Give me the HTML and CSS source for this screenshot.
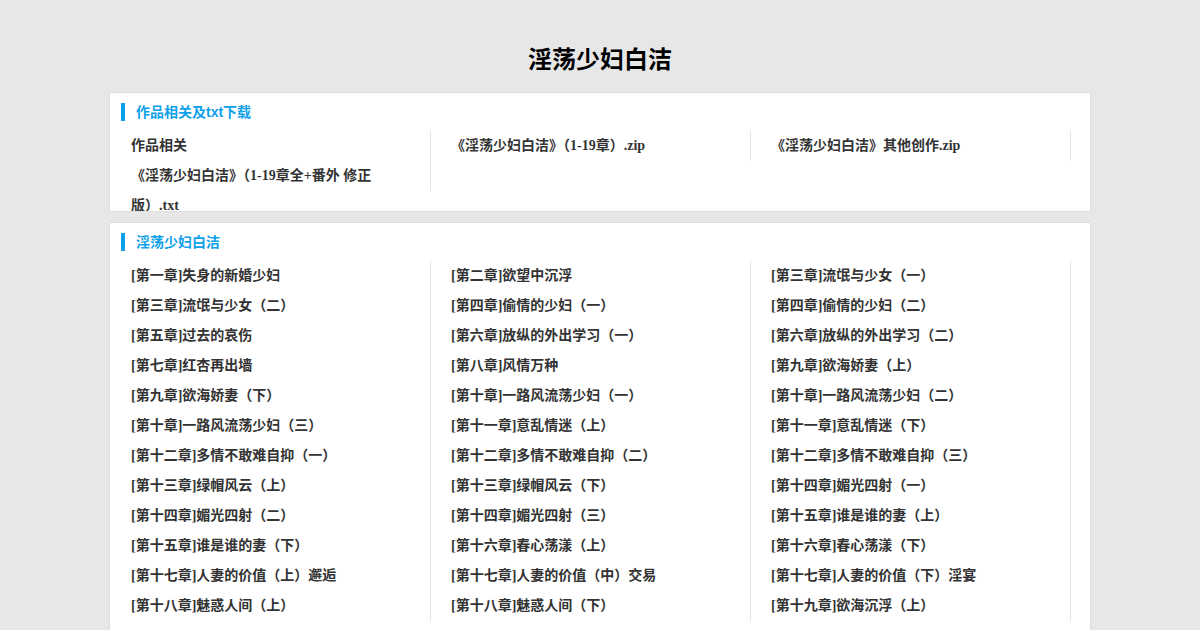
FILE: index.html
```html
<!DOCTYPE html>
<html lang="zh-CN">
<head>
  <meta charset="UTF-8" />
  <meta name="viewport" content="width=device-width, initial-scale=1" />
  <link rel="stylesheet" href="styles.css">
</head>
<body>
  <h1 class="book-title">淫荡少妇白洁</h1>

  <div class="box">
    <div class="box-head"><span>作品相关及txt下载</span></div>
    <ul class="list clearfix">
      <li>作品相关</li>
      <li>《淫荡少妇白洁》（1-19章）.zip</li>
      <li>《淫荡少妇白洁》其他创作.zip</li>
      <li>《淫荡少妇白洁》（1-19章全+番外 修正版）.txt</li>
    </ul>
  </div>

  <div class="box">
    <div class="box-head"><span>淫荡少妇白洁</span></div>
    <ul class="list clearfix">
      <li>[第一章]失身的新婚少妇</li>
      <li>[第二章]欲望中沉浮</li>
      <li>[第三章]流氓与少女（一）</li>
      <li>[第三章]流氓与少女（二）</li>
      <li>[第四章]偷情的少妇（一）</li>
      <li>[第四章]偷情的少妇（二）</li>
      <li>[第五章]过去的哀伤</li>
      <li>[第六章]放纵的外出学习（一）</li>
      <li>[第六章]放纵的外出学习（二）</li>
      <li>[第七章]红杏再出墙</li>
      <li>[第八章]风情万种</li>
      <li>[第九章]欲海娇妻（上）</li>
      <li>[第九章]欲海娇妻（下）</li>
      <li>[第十章]一路风流荡少妇（一）</li>
      <li>[第十章]一路风流荡少妇（二）</li>
      <li>[第十章]一路风流荡少妇（三）</li>
      <li>[第十一章]意乱情迷（上）</li>
      <li>[第十一章]意乱情迷（下）</li>
      <li>[第十二章]多情不敢难自抑（一）</li>
      <li>[第十二章]多情不敢难自抑（二）</li>
      <li>[第十二章]多情不敢难自抑（三）</li>
      <li>[第十三章]绿帽风云（上）</li>
      <li>[第十三章]绿帽风云（下）</li>
      <li>[第十四章]媚光四射（一）</li>
      <li>[第十四章]媚光四射（二）</li>
      <li>[第十四章]媚光四射（三）</li>
      <li>[第十五章]谁是谁的妻（上）</li>
      <li>[第十五章]谁是谁的妻（下）</li>
      <li>[第十六章]春心荡漾（上）</li>
      <li>[第十六章]春心荡漾（下）</li>
      <li>[第十七章]人妻的价值（上）邂逅</li>
      <li>[第十七章]人妻的价值（中）交易</li>
      <li>[第十七章]人妻的价值（下）淫宴</li>
      <li>[第十八章]魅惑人间（上）</li>
      <li>[第十八章]魅惑人间（下）</li>
      <li>[第十九章]欲海沉浮（上）</li>
    </ul>
  </div>
</body>
</html>
```

FILE: styles.css
```css
html, body {
  margin: 0;
  padding: 0;
  background-color: #e7e7e7;
  font-family: "Liberation Serif", "Noto Sans CJK SC", serif;
  color: #333;
}
ul, li {
  margin: 0;
  padding: 0;
  list-style: none;
}
.clearfix::after {
  content: "";
  display: block;
  clear: both;
}
.book-title {
  margin: 0;
  padding: 40px 0 12px;
  height: 40px;
  line-height: 40px;
  text-align: center;
  font-family: "Liberation Sans", "Noto Sans CJK SC", sans-serif;
  font-size: 24px;
  font-weight: bold;
  color: #000;
}
.box {
  width: 980px;
  margin: 0 auto 10px;
  background: #fff;
  border: 1px solid #dedede;
  padding-bottom: 20px;
  overflow: hidden;
}
.box-head {
  padding: 10px 10px 10px 11px;
}
.box-head span {
  display: block;
  border-left: 4px solid #0ea1ea;
  padding-left: 11px;
  height: 18px;
  line-height: 18px;
  font-family: "Liberation Sans", "Noto Sans CJK SC", sans-serif;
  font-size: 14px;
  font-weight: bold;
  color: #0ea1ea;
}
.list {
  padding-left: 1px;
}
.list li {
  float: left;
  width: 320px;
  height: 30px;
  line-height: 30px;
  padding: 0 20px;
  box-sizing: border-box;
  border-right: 1px solid #e2e2e2;
  font-size: 14px;
  font-weight: bold;
  color: #333;
}
```
